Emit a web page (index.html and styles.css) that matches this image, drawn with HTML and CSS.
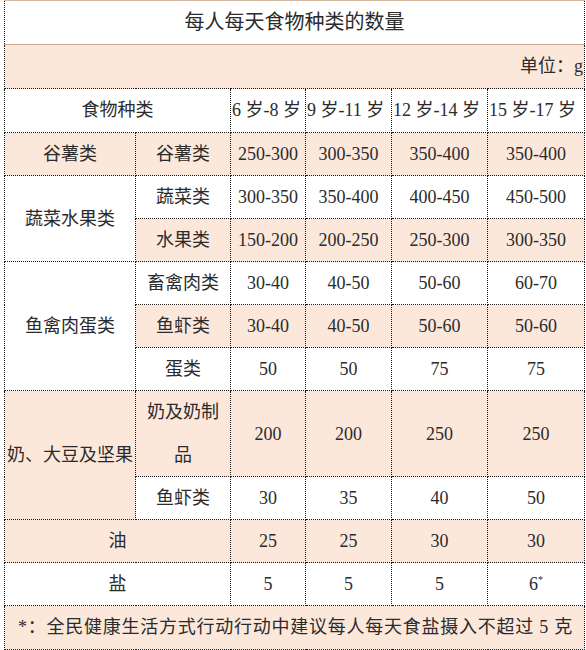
FILE: index.html
```html
<!DOCTYPE html>
<html lang="zh">
<head>
<meta charset="utf-8">
<title>每人每天食物种类的数量</title>
<link rel="stylesheet" href="styles.css">
</head>
<body>
<div class="wrap">
<table class="food">
<colgroup>
<col class="c1"><col class="c2"><col class="c3"><col class="c4"><col class="c5"><col class="c6">
</colgroup>
<tr class="r-title"><td colspan="6" class="title">每人每天食物种类的数量</td></tr>
<tr class="r-unit tint"><td colspan="6" class="unit">单位：g</td></tr>
<tr class="r-head"><td colspan="2">食物种类</td><td class="age">6 岁-8 岁</td><td class="age">9 岁-11 岁</td><td class="age">12 岁-14 岁</td><td class="age">15 岁-17 岁</td></tr>
<tr class="r tint"><td>谷薯类</td><td>谷薯类</td><td>250-300</td><td>300-350</td><td>350-400</td><td>350-400</td></tr>
<tr class="r"><td rowspan="2">蔬菜水果类</td><td>蔬菜类</td><td>300-350</td><td>350-400</td><td>400-450</td><td>450-500</td></tr>
<tr class="r tint"><td>水果类</td><td>150-200</td><td>200-250</td><td>250-300</td><td>300-350</td></tr>
<tr class="r"><td rowspan="3">鱼禽肉蛋类</td><td>畜禽肉类</td><td>30-40</td><td>40-50</td><td>50-60</td><td>60-70</td></tr>
<tr class="r tint"><td>鱼虾类</td><td>30-40</td><td>40-50</td><td>50-60</td><td>50-60</td></tr>
<tr class="r"><td>蛋类</td><td>50</td><td>50</td><td>75</td><td>75</td></tr>
<tr class="r2 tint"><td rowspan="2" class="nowrap">奶、大豆及坚果</td><td class="wrapcell">奶及奶制品</td><td>200</td><td>200</td><td>250</td><td>250</td></tr>
<tr class="r"><td>鱼虾类</td><td>30</td><td>35</td><td>40</td><td>50</td></tr>
<tr class="r tint"><td colspan="2">油</td><td>25</td><td>25</td><td>30</td><td>30</td></tr>
<tr class="r"><td colspan="2">盐</td><td>5</td><td>5</td><td>5</td><td>6<sup class="star">*</sup></td></tr>
<tr class="r-note tint"><td colspan="6" class="note">*：全民健康生活方式行动行动中建议每人每天食盐摄入不超过 5 克</td></tr>
</table>
</div>
</body>
</html>
```
FILE: styles.css
```css
html, body {
  margin: 0;
  padding: 0;
  background: #ffffff;
}
.wrap {
  padding: 0 0 0 4px;
}
.food {
  border-collapse: collapse;
  table-layout: fixed;
  width: 580px;
  font-family: "Liberation Serif", "Noto Sans CJK SC", serif;
  font-size: 18px;
  color: #2b2b2b;
}
.c1 { width: 131px; }
.c2 { width: 95px; }
.c3 { width: 75px; }
.c4 { width: 86px; }
.c5 { width: 96px; }
.c6 { width: 97px; }
.food td {
  border: 1px dotted #1a1a1a;
  padding: 0;
  text-align: center;
  vertical-align: middle;
  line-height: 42px;
  white-space: nowrap;
}
.tint td { background: #fce8db; }
.r td { height: 42px; }
.r-title td.title {
  height: 43px;
  line-height: 43px;
  font-size: 20px;
  border-top: 1px solid #d7b9a2;
  border-bottom: 1px solid #c9a88e;
  background: #ffffff;
}
.r-unit td.unit {
  height: 43px;
  line-height: 43px;
  text-align: right;
  padding-right: 1px;
  border-top: 1px solid #c9a88e;
}
.r-head td {
  height: 42px;
  line-height: 43px;
}
.r-head td.age {
  text-align: left;
  padding-left: 1px;
  overflow: visible;
}
.r2 td { height: 85px; }
.food td.wrapcell {
  white-space: normal;
  padding: 0 9px;
  line-height: 42.5px;
}
.food td.nowrap { white-space: nowrap; }
.r-note td.note {
  height: 43px;
  line-height: 43px;
  text-align: left;
  padding-left: 13px;
  letter-spacing: 0.75px;
}
.star {
  font-size: 10px;
  line-height: 0;
  vertical-align: 7px;
}
```
